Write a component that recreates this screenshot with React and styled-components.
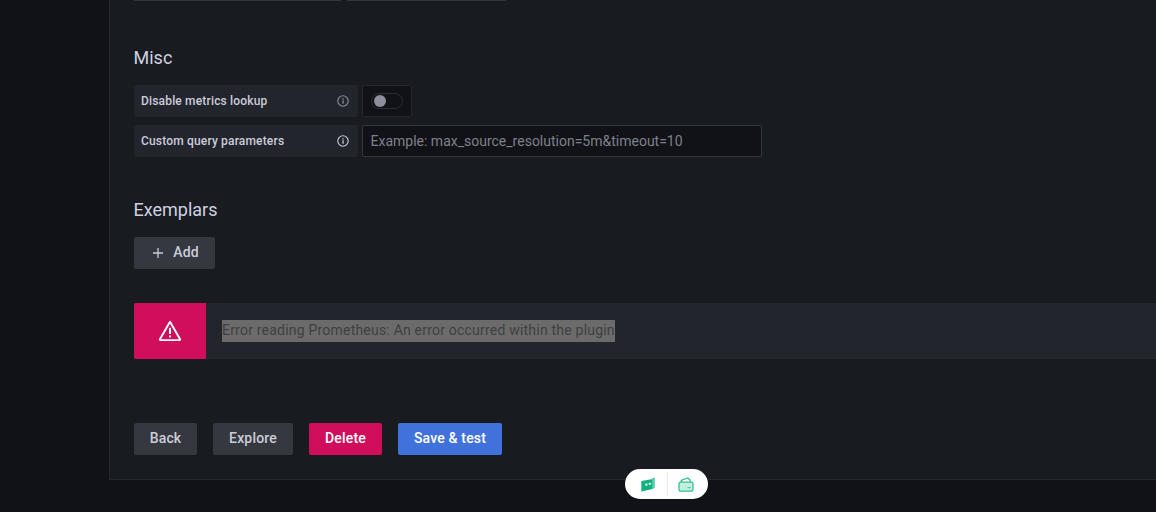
import React from "react";
import styled, { createGlobalStyle } from "styled-components";

const Global = createGlobalStyle`
  html, body { margin: 0; padding: 0; background: #111217; }
  body { font-family: Roboto, "Liberation Sans", sans-serif; overflow: hidden; }
  #root { width: 1156px; height: 512px; }
`;

const Page = styled.div`
  position: relative;
  width: 1156px;
  height: 512px;
  padding-left: 109px;
  box-sizing: border-box;
  background: #111217;
  overflow: hidden;
`;

const Panel = styled.main`
  box-sizing: border-box;
  height: 480px;
  padding-left: 24px;
  background: #181b1f;
  border-left: 1px solid #25272b;
  border-bottom: 1px solid #25272b;
`;

const StubRow = styled.div`
  display: flex;
  gap: 6px;
  height: 1px;
`;

const Stub = styled.div`
  width: ${(p) => p.$w}px;
  background: #34373c;
`;

const Heading = styled.h3`
  margin: ${(p) => p.$top}px 0 0 -0.5px;
  height: 24px;
  font-size: 18px;
  line-height: 24px;
  font-weight: 400;
  color: #d0d0e2;
`;

const Row = styled.div`
  display: flex;
  gap: 4px;
  margin-top: ${(p) => p.$top}px;
  height: 32px;
`;

const Label = styled.label`
  box-sizing: border-box;
  width: 224px;
  padding: 0 9px 0 7px;
  display: flex;
  align-items: center;
  justify-content: space-between;
  background: #22252b;
  border-radius: 2px;
  font-size: 12px;
  font-weight: 500;
  letter-spacing: 0.17px;
  color: #ccccdc;
`;

const SwitchBox = styled.div`
  box-sizing: border-box;
  width: 50px;
  display: flex;
  align-items: center;
  justify-content: center;
  background: #111217;
  border: 1px solid #25272b;
  border-radius: 2px;
`;

const Track = styled.span`
  box-sizing: border-box;
  position: relative;
  display: block;
  width: 32px;
  height: 16px;
  border: 1px solid #2b2e33;
  border-radius: 8px;
  background: #111217;
`;

const Knob = styled.span`
  position: absolute;
  left: 2px;
  top: 1px;
  width: 12px;
  height: 12px;
  border-radius: 50%;
  background: #8e8e9c;
`;

const QueryInput = styled.input`
  box-sizing: border-box;
  width: 400px;
  height: 32px;
  padding: 0 7.5px;
  background: #111217;
  border: 1px solid #34373c;
  border-radius: 2px;
  font: 400 14px Roboto, "Liberation Sans", sans-serif;
  color: #ccccdc;
  &::placeholder { color: #7f808a; opacity: 1; }
`;

const Btn = styled.button`
  box-sizing: border-box;
  width: ${(p) => p.$w}px;
  height: 32px;
  padding: 0 0 2px;
  display: inline-flex;
  align-items: center;
  justify-content: center;
  gap: ${(p) => p.$gap || 0}px;
  border: 0;
  border-radius: 2px;
  font: 500 14px Roboto, "Liberation Sans", sans-serif;
  letter-spacing: 0.17px;
  background: ${(p) => p.$bg || "#35383e"};
  color: ${(p) => p.$fg || "#ccccdc"};
`;

const PlusGlyph = styled.svg`
  margin: 2px 0 0 2px;
`;

const AddWrap = styled.div`
  margin-top: 15px;
`;

const Alert = styled.div`
  display: flex;
  margin-top: 34px;
  height: 56px;
  background: #22252b;
`;

const AlertIcon = styled.div`
  width: 72px;
  flex: none;
  display: flex;
  align-items: center;
  justify-content: center;
  background: #d10e5c;
  border-radius: 2px 0 0 2px;
`;

const AlertBody = styled.div`
  display: flex;
  align-items: center;
  padding-left: 16px;
  font-size: 14px;
  letter-spacing: 0.21px;
  color: #3f3f42;
`;

const Selected = styled.span`
  display: block;
  height: 22px;
  line-height: 20px;
  background: #6b6b6b;
`;

const Actions = styled.div`
  display: flex;
  gap: 16px;
  margin-top: 64px;
`;

const Pill = styled.div`
  position: absolute;
  left: 625px;
  top: 469px;
  width: 83px;
  height: 30px;
  display: grid;
  grid-template-columns: 42px 1px 40px;
  align-items: center;
  background: #fff;
  border-radius: 15px;
`;

const PillSlot = styled.div`
  height: 100%;
  padding: ${(p) => p.$pad};
  box-sizing: border-box;
  display: flex;
  align-items: center;
  justify-content: center;
`;

const PillDivider = styled.div`
  width: 1px;
  height: 24px;
  background: #e8e8e8;
`;

const InfoIcon = ({ color }) => (
  <svg width="12" height="12" viewBox="0 0 12 12" fill="none">
    <circle cx="6" cy="6" r="5.2" stroke={color} strokeWidth="1.1" />
    <rect x="5.4" y="5.3" width="1.3" height="3.4" fill={color} />
    <rect x="5.4" y="3.2" width="1.3" height="1.3" fill={color} />
  </svg>
);

const PlusIcon = () => (
  <PlusGlyph width="12" height="12" viewBox="0 0 12 12" fill="none">
    <path d="M6 1v10M1 6h10" stroke="#ccccdc" strokeWidth="1.3" />
  </PlusGlyph>
);

const WarnIcon = () => (
  <svg width="24" height="24" viewBox="0 0 24 24" fill="none">
    <path
      d="M12 2.8 1.9 20.2a.6.6 0 0 0 .5.9h19.2a.6.6 0 0 0 .5-.9L12 2.8Z"
      stroke="#fff"
      strokeWidth="1.9"
      strokeLinejoin="round"
    />
    <rect x="11" y="8.8" width="2" height="6.2" fill="#fff" />
    <rect x="11" y="16.4" width="2" height="2" fill="#fff" />
  </svg>
);

const FlagIcon = () => (
  <svg width="14" height="15" viewBox="0 0 14 15">
    <path d="M0.3 4 10.5 2.2 13.5 0.6v10.2l-3 1.4L0.3 14.5Z" fill="#0fb27e" />
    <path d="M11.2 2v10l2.3-1.2V.6Z" fill="#5acfa8" />
    <rect x="4.4" y="6.6" width="2" height="2" fill="#fff" />
    <rect x="7.8" y="5.8" width="2" height="2" fill="#fff" />
  </svg>
);

const CaseIcon = () => (
  <svg width="16" height="15" viewBox="0 0 16 15" fill="none">
    <path d="M3.5 5.5 3.2 3.4 9.6 1l2.2 1.6.6 2.9" stroke="#2fc392" strokeWidth="1.3" />
    <rect x="1" y="5.2" width="14" height="9" rx="1.6" fill="#c4eede" stroke="#2fc392" strokeWidth="1.3" />
    <path d="M9.5 10.7h3.2" stroke="#2fc392" strokeWidth="1" />
  </svg>
);

export default function App() {
  return (
    <Page>
      <Global />
      <Panel>
        <StubRow>
          <Stub $w={207} />
          <Stub $w={159} />
        </StubRow>
        <Heading $top={45}>Misc</Heading>
        <Row $top={15}>
          <Label>
            Disable metrics lookup
            <InfoIcon color="#8e8f99" />
          </Label>
          <SwitchBox>
            <Track>
              <Knob />
            </Track>
          </SwitchBox>
        </Row>
        <Row $top={8}>
          <Label>
            Custom query parameters
            <InfoIcon color="#ccccdc" />
          </Label>
          <QueryInput placeholder="Example: max_source_resolution=5m&timeout=10" />
        </Row>
        <Heading $top={41}>Exemplars</Heading>
        <AddWrap>
          <Btn $w={81} $gap={9}>
            <PlusIcon />
            Add
          </Btn>
        </AddWrap>
        <Alert>
          <AlertIcon>
            <WarnIcon />
          </AlertIcon>
          <AlertBody>
            <Selected>Error reading Prometheus: An error occurred within the plugin</Selected>
          </AlertBody>
        </Alert>
        <Actions>
          <Btn $w={63}>Back</Btn>
          <Btn $w={80}>Explore</Btn>
          <Btn $w={73} $bg="#d10e5c" $fg="#fff">Delete</Btn>
          <Btn $w={104} $bg="#4172dc" $fg="#fff">Save &amp; test</Btn>
        </Actions>
      </Panel>
      <Pill>
        <PillSlot $pad="0 0 0 4px">
          <FlagIcon />
        </PillSlot>
        <PillDivider />
        <PillSlot $pad="0 5px 0 0">
          <CaseIcon />
        </PillSlot>
      </Pill>
    </Page>
  );
}
